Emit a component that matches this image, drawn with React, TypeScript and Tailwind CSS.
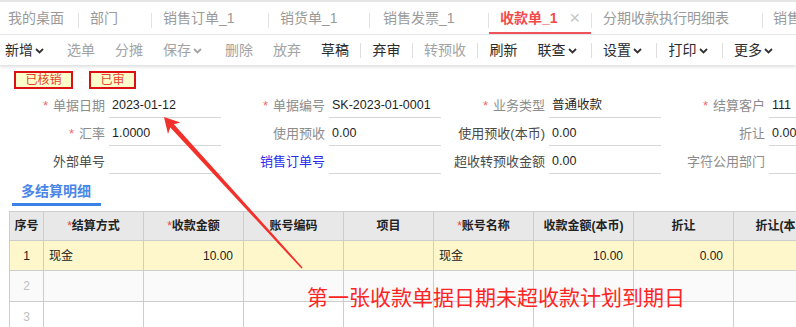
import React from "react";

const font = { fontFamily: '"Liberation Sans", "Noto Sans CJK SC", sans-serif' };

const tabs = [
  { label: "我的桌面", w: "w-[78px]", pl: "pl-[8px]" },
  { label: "部门", w: "w-[72px]", pl: "pl-[11px]" },
  { label: "销售订单_1", w: "w-[116px]", pl: "pl-[11px]" },
  { label: "销货单_1", w: "w-[100px]", pl: "pl-[11px]" },
  { label: "销售发票_1", w: "w-[118px]", pl: "pl-[13px]" },
  { label: "收款单_1", w: "w-[102px]", pl: "pl-[11px]", active: true },
  { label: "分期收款执行明细表", w: "w-[170px]", pl: "pl-[11px]" },
  { label: "销售单_1", w: "w-[100px]", pl: "pl-[10px]" },
];

type Tool = { label: string; on?: boolean; menu?: boolean; sep?: boolean };

const tools: Tool[] = [
  { label: "新增", on: true, menu: true },
  { label: "选单" },
  { label: "分摊" },
  { label: "保存", menu: true },
  { label: "删除" },
  { label: "放弃" },
  { label: "草稿", on: true, sep: true },
  { label: "弃审", on: true, sep: true },
  { label: "转预收", sep: true },
  { label: "刷新", on: true },
  { label: "联查", on: true, menu: true, sep: true },
  { label: "设置", on: true, menu: true, sep: true },
  { label: "打印", on: true, menu: true, sep: true },
  { label: "更多", on: true, menu: true },
];

function Chevron({ color }: { color: string }) {
  return (
    <svg width="9" height="6" viewBox="0 0 9 6" className="ml-[2px] mt-[1px]">
      <path d="M1 1 L4.5 4.5 L8 1" fill="none" stroke={color} strokeWidth="1.8" />
    </svg>
  );
}

type Field = { label: string; value?: string; req?: boolean; tone?: "light" | "dark" | "link" };

const fields: Field[] = [
  { label: "单据日期", value: "2023-01-12", req: true },
  { label: "单据编号", value: "SK-2023-01-0001", req: true },
  { label: "业务类型", value: "普通收款", req: true },
  { label: "结算客户", value: "111", req: true },
  { label: "汇率", value: "1.0000", req: true },
  { label: "使用预收", value: "0.00" },
  { label: "使用预收(本币)", value: "0.00", tone: "dark" },
  { label: "折让", value: "0.00" },
  { label: "外部单号", tone: "dark" },
  { label: "销售订单号", tone: "link" },
  { label: "超收转预收金额", value: "0.00", tone: "dark" },
  { label: "字符公用部门" },
];

const cols = [
  { t: "序号", w: "w-[34px]" },
  { t: "结算方式", w: "w-[100px]", req: true },
  { t: "收款金额", w: "w-[100px]", req: true },
  { t: "账号编码", w: "w-[100px]" },
  { t: "项目", w: "w-[90px]" },
  { t: "账号名称", w: "w-[100px]", req: true },
  { t: "收款金额(本币)", w: "w-[100px]" },
  { t: "折让", w: "w-[100px]" },
  { t: "折让(本币)", w: "w-[100px]" },
];

const row1 = ["1", "现金", "10.00", "", "", "现金", "10.00", "0.00", ""];
const align = ["text-center", "text-left", "text-right", "text-left", "text-left", "text-left", "text-right", "text-right", "text-right"];

export default function App() {
  return (
    <div className="relative h-[327px] w-[796px] overflow-hidden bg-white" style={font}>
      {/* tab bar */}
      <div className="flex h-[35px] items-stretch overflow-hidden whitespace-nowrap border-t-2 border-b border-t-[#e6e6e6] border-b-[#e4e6ee] bg-white text-[14px]">
        {tabs.map((t, i) => (
          <React.Fragment key={t.label}>
            <div
              className={`relative flex shrink-0 items-center ${t.w} ${t.pl} ${
                t.active ? "font-semibold text-[#f24a4a]" : "text-[#9a9a9a]"
              }`}
            >
              {t.label}
              {t.active && (
                <>
                  <span className="ml-[12px] text-[18px] font-light leading-none text-[#c4c4c4]">×</span>
                  <span className="absolute bottom-[-1px] left-0 right-0 h-[3px] bg-[#f0525a]" />
                </>
              )}
            </div>
            {i < tabs.length - 1 && <span className="mt-[11px] h-[15px] w-px shrink-0 bg-[#e2e2e2]" />}
          </React.Fragment>
        ))}
      </div>

      {/* toolbar */}
      <div className="relative z-10 flex h-[30px] items-center whitespace-nowrap bg-white pl-[5px] text-[14px] shadow-[0_2px_3px_rgba(0,0,0,0.13)]">
        {tools.map((t) => (
          <React.Fragment key={t.label}>
            <div
              className={`flex items-center ${t.on ? "text-[#2b2b2b]" : "text-[#a3a3a3]"} ${
                t.sep ? (t.menu ? "mr-[14px]" : "mr-[11px]") : t.menu ? "mr-[23px]" : "mr-[20px]"
              }`}
            >
              {t.label}
              {t.menu && <Chevron color={t.on ? "#333" : "#a3a3a3"} />}
            </div>
            {t.sep && <span className="mr-[12px] h-[15px] w-px bg-[#dedede]" />}
          </React.Fragment>
        ))}
      </div>

      {/* status badges */}
      <div className="flex gap-[16px] pl-[14px] pt-[6px]">
        <span className="flex h-[18px] w-[59px] items-center justify-center border-2 border-[#dd1111] bg-[#ffffcc] text-[12px] text-[#e8402a]">
          已核销
        </span>
        <span className="flex h-[18px] w-[47px] items-center justify-center border-2 border-[#dd1111] bg-[#ffffcc] text-[12px] text-[#e8402a]">
          已审
        </span>
      </div>

      {/* form */}
      <div className="mt-[1px] grid w-[900px] grid-cols-[220px_220px_220px_220px] text-[13px]">
        {fields.map((f) => (
          <div key={f.label} className="flex h-[28px] items-end">
            <div
              className={`flex h-[24px] w-[105px] shrink-0 items-center justify-end whitespace-nowrap ${
                f.tone === "dark" ? "text-[#4a4a4a]" : f.tone === "link" ? "text-[#2b2bf0]" : "text-[#8c8c8c]"
              }`}
            >
              {f.req && <span className="mr-[5px] text-[#f06a6a]">*</span>}
              {f.label}
            </div>
            <div className="ml-[4px] flex h-[24px] w-[112px] shrink-0 items-center overflow-hidden whitespace-nowrap border-b border-[#d6d6d6] pl-[3px] text-[12.5px] text-[#1f1f1f]">
              {f.value}
            </div>
          </div>
        ))}
      </div>

      {/* detail tab */}
      <div className="ml-[12px] h-[32px] w-[89px] border-b-[3px] border-[#3b82e6] pl-[9px] pt-[7px] text-[14px] font-bold leading-[20px] text-[#4a86e8]">
        多结算明细
      </div>

      {/* grid */}
      <table className="ml-[9px] mt-[5px] w-[824px] table-fixed border-collapse text-[12px]">
        <thead>
          <tr className="h-[29px] bg-[#e8e8e8]">
            {cols.map((c) => (
              <th key={c.t} className={`${c.w} overflow-hidden whitespace-nowrap border border-[#cdcdcd] font-bold text-[#222]`}>
                {c.req && <span className="font-normal text-[#f04040]">*</span>}
                {c.t}
              </th>
            ))}
          </tr>
        </thead>
        <tbody>
          <tr className="h-[30px] bg-[#fff7cc] text-[#222]">
            {row1.map((v, i) => (
              <td key={i} className={`border border-[#cdcdcd] px-[5px] ${align[i]} ${i === 2 || i === 6 || i === 7 ? "pr-[10px]" : ""}`}>
                {v}
              </td>
            ))}
          </tr>
          <tr className="h-[31px] bg-[#fafafa]">
            {cols.map((c, i) => (
              <td key={c.t} className="border border-[#cdcdcd] text-center text-[#c0c0c0]">
                {i === 0 ? "2" : ""}
              </td>
            ))}
          </tr>
          <tr className="h-[31px] bg-white">
            {cols.map((c, i) => (
              <td key={c.t} className="border border-[#cdcdcd] text-center text-[#c0c0c0]">
                {i === 0 ? "3" : ""}
              </td>
            ))}
          </tr>
        </tbody>
      </table>

      {/* annotation */}
      <svg className="pointer-events-none absolute left-0 top-0 z-20" width="796" height="327" viewBox="0 0 796 327">
        <polygon
          points="164,117 180.5,122.5 173.9,124.2 302.6,267.4 301.4,268.6 170.3,127.6 168,134"
          fill="#f2312b"
        />
      </svg>
      <div className="pointer-events-none absolute left-[307px] top-[285px] z-20 whitespace-nowrap text-[21px] leading-[26px] text-[#ff2424]">
        第一张收款单据日期未超收款计划到期日
      </div>
    </div>
  );
}
